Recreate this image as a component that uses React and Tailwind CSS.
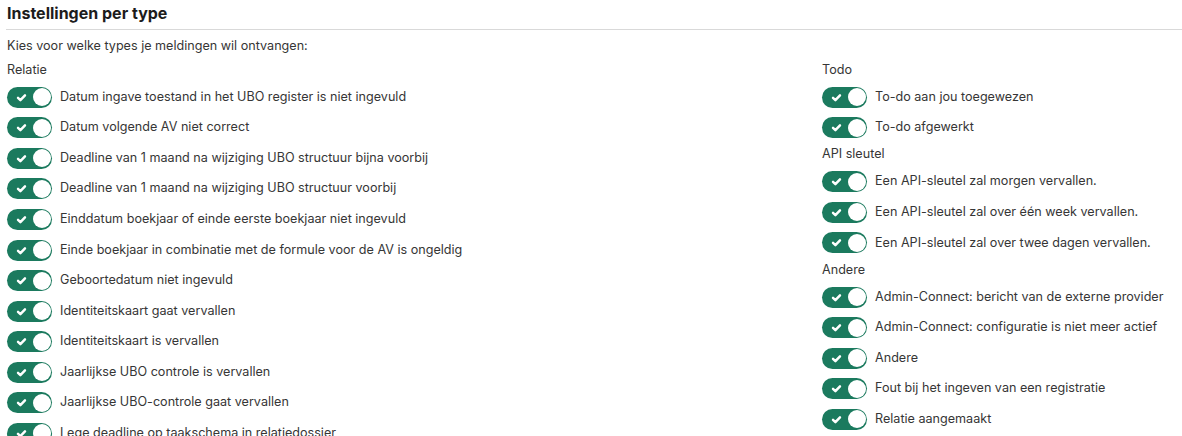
import React from "react";

const relatie = [
  "Datum ingave toestand in het UBO register is niet ingevuld",
  "Datum volgende AV niet correct",
  "Deadline van 1 maand na wijziging UBO structuur bijna voorbij",
  "Deadline van 1 maand na wijziging UBO structuur voorbij",
  "Einddatum boekjaar of einde eerste boekjaar niet ingevuld",
  "Einde boekjaar in combinatie met de formule voor de AV is ongeldig",
  "Geboortedatum niet ingevuld",
  "Identiteitskaart gaat vervallen",
  "Identiteitskaart is vervallen",
  "Jaarlijkse UBO controle is vervallen",
  "Jaarlijkse UBO-controle gaat vervallen",
  "Lege deadline op taakschema in relatiedossier",
];

const groups = [
  { title: "Todo", items: ["To-do aan jou toegewezen", "To-do afgewerkt"] },
  {
    title: "API sleutel",
    items: [
      "Een API-sleutel zal morgen vervallen.",
      "Een API-sleutel zal over één week vervallen.",
      "Een API-sleutel zal over twee dagen vervallen.",
    ],
  },
  {
    title: "Andere",
    items: [
      "Admin-Connect: bericht van de externe provider",
      "Admin-Connect: configuratie is niet meer actief",
      "Andere",
      "Fout bij het ingeven van een registratie",
      "Relatie aangemaakt",
    ],
  },
];

// switch is always on in the screenshot
const Toggle = () => (
  <span className="relative flex items-center w-[45px] h-[21px] rounded-full bg-[#1b7a5e] shrink-0">
    <svg
      viewBox="0 0 12 12"
      className="absolute left-[9px] top-[5px] w-[11px] h-[11px]"
      fill="none"
      stroke="white"
      strokeWidth="2.7"
      strokeLinecap="round"
      strokeLinejoin="round"
    >
      <path d="M2.2 6.4l2.6 2.5L9.8 3.6" />
    </svg>
    <span className="absolute right-[1.5px] top-[1.5px] w-[18px] h-[18px] rounded-full bg-white" />
  </span>
);

const Row = ({ label }) => (
  <div className="flex items-center h-[30.55px] gap-[8px]">
    <Toggle />
    <span>{label}</span>
  </div>
);

const Heading = ({ children }) => (
  <div className="flex items-center h-[23.5px]">{children}</div>
);

export default function App() {
  return (
    <div
      className="pl-[6px] text-[12.6px] text-[#363636] bg-white h-[436px] overflow-hidden"
      style={{ fontFamily: "Inter, 'Noto Sans', sans-serif" }}
    >
      <h2 className="h-[30px] flex items-center pl-[1px] pb-[4px] border-b border-[#d9d9d9] text-[16px] font-bold text-[#1c1c1c]">
        Instellingen per type
      </h2>
      <div className="pl-[1px]">
        <div className="flex items-center h-[28.5px] pt-[4px]">
          Kies voor welke types je meldingen wil ontvangen:
        </div>
        <div className="flex">
          <div className="w-[815px]">
            <Heading>Relatie</Heading>
            {relatie.map((l) => (
              <Row key={l} label={l} />
            ))}
          </div>
          <div>
            {groups.map((g) => (
              <div key={g.title}>
                <Heading>{g.title}</Heading>
                {g.items.map((l) => (
                  <Row key={l} label={l} />
                ))}
              </div>
            ))}
          </div>
        </div>
      </div>
    </div>
  );
}
